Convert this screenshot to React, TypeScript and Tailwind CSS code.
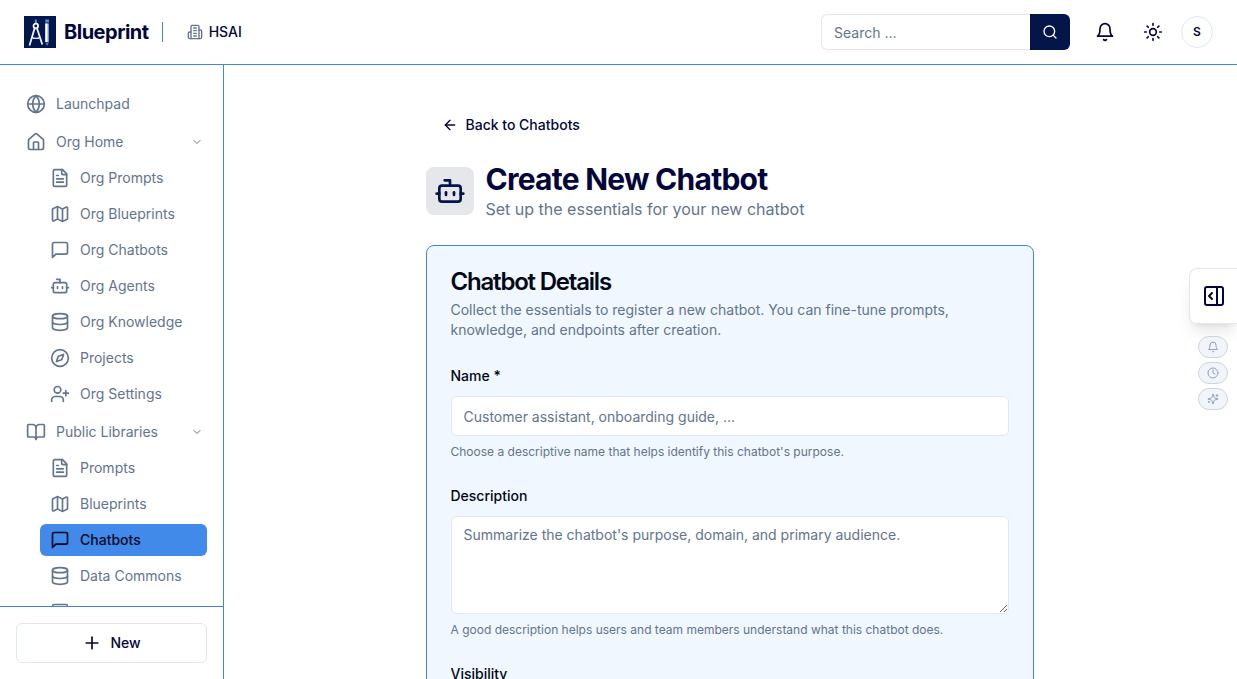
import React from 'react';
import {
  ArrowLeft,
  BookOpen,
  Bot,
  ChevronDown,
  Clock,
  Compass,
  Database,
  Globe,
  House,
  Map,
  PanelRightOpen,
  Plus,
  Search,
  SquareTerminal,
  Sun,
  UserPlus,
} from 'lucide-react';

interface IconProps {
  className?: string;
}

interface NavItem {
  label: string;
  icon: React.ComponentType<IconProps>;
  active?: boolean;
}

interface NavSection {
  label: string;
  icon: React.ComponentType<IconProps>;
  items: NavItem[];
}

// Wrapper for the hand-drawn outline icons
const Outline: React.FC<IconProps & { children: React.ReactNode }> = ({ className, children }) => (
  <svg className={className} viewBox="0 0 24 24" fill="none" stroke="currentColor" strokeWidth="2" strokeLinecap="round" strokeLinejoin="round" aria-hidden="true">
    {children}
  </svg>
);

const BellIcon: React.FC<IconProps> = ({ className }) => (
  <Outline className={className}>
    <path d="M6 8a6 6 0 0 1 12 0c0 7 3 9 3 9H3s3-2 3-9" />
    <path d="M10.3 21a1.94 1.94 0 0 0 3.4 0" />
  </Outline>
);

const MessageIcon: React.FC<IconProps> = ({ className }) => (
  <Outline className={className}>
    <path d="M21 15a2 2 0 0 1-2 2H7l-4 4V5a2 2 0 0 1 2-2h14a2 2 0 0 1 2 2z" />
  </Outline>
);

const FileIcon: React.FC<IconProps> = ({ className }) => (
  <Outline className={className}>
    <path d="M15 2H6a2 2 0 0 0-2 2v16a2 2 0 0 0 2 2h12a2 2 0 0 0 2-2V7Z" />
    <path d="M14 2v4a2 2 0 0 0 2 2h4M10 9H8M16 13H8M16 17H8" />
  </Outline>
);

const BuildingIcon: React.FC<IconProps> = ({ className }) => (
  <Outline className={className}>
    <path d="M6 22V4a2 2 0 0 1 2-2h8a2 2 0 0 1 2 2v18Z" />
    <path d="M6 12H4a2 2 0 0 0-2 2v6a2 2 0 0 0 2 2h2" />
    <path d="M18 9h2a2 2 0 0 1 2 2v9a2 2 0 0 1-2 2h-2" />
    <path d="M10 6h4M10 10h4M10 14h4M10 18h4" />
  </Outline>
);

const SparklesIcon: React.FC<IconProps> = ({ className }) => (
  <Outline className={className}>
    <path d="M9.937 15.5A2 2 0 0 0 8.5 14.063l-6.135-1.582a.5.5 0 0 1 0-.962L8.5 9.936A2 2 0 0 0 9.937 8.5l1.582-6.135a.5.5 0 0 1 .963 0L14.063 8.5A2 2 0 0 0 15.5 9.937l6.135 1.581a.5.5 0 0 1 0 .964L15.5 14.063a2 2 0 0 0-1.437 1.437l-1.582 6.135a.5.5 0 0 1-.963 0z" />
    <path d="M20 3v4M22 5h-4M4 17v2M5 18H3" />
  </Outline>
);

const Logo: React.FC = () => (
  <svg className="h-8 w-8" viewBox="0 0 32 32" fill="none" aria-hidden="true">
    <rect width="32" height="32" fill="#04174a" />
    <path d="M11.8 3.5v4.500" stroke="#4d8fe0" strokeWidth="2" />
    <circle cx="11.800" cy="10" r="2.300" stroke="#fff" strokeWidth="1.700" />
    <path d="M10.700 12 5.500 29.500M12.900 12l5.400 16.500" stroke="#eef2fa" strokeWidth="1.800" />
    <path d="M8 21.500q4 1.800 8 0" stroke="#dfe7f5" strokeWidth="1.400" />
    <path d="M21.300 3.500h3.600v3h-3.600z" fill="#4d8fe0" />
    <path d="M21.300 7.500h3.600v18.500h-3.600z" fill="#7fa5dc" />
    <path d="M21.300 7.500h2.200v18.500h-2.200z" fill="#fff" />
    <path d="M21.300 26.500h3.600L23.100 30z" fill="#3f7fd0" />
  </svg>
);

const sections: NavSection[] = [
  {
    label: 'Org Home',
    icon: House,
    items: [
      { label: 'Org Prompts', icon: FileIcon },
      { label: 'Org Blueprints', icon: Map },
      { label: 'Org Chatbots', icon: MessageIcon },
      { label: 'Org Agents', icon: Bot },
      { label: 'Org Knowledge', icon: Database },
      { label: 'Projects', icon: Compass },
      { label: 'Org Settings', icon: UserPlus },
    ],
  },
  {
    label: 'Public Libraries',
    icon: BookOpen,
    items: [
      { label: 'Prompts', icon: FileIcon },
      { label: 'Blueprints', icon: Map },
      { label: 'Chatbots', icon: MessageIcon, active: true },
      { label: 'Data Commons', icon: Database },
      { label: 'Tools', icon: SquareTerminal },
    ],
  },
];

const quickActions: NavItem[] = [
  { label: 'Notifications', icon: BellIcon },
  { label: 'History', icon: Clock },
  { label: 'Assistant', icon: SparklesIcon },
];

/* ── Top bar ── */
const Header: React.FC = () => (
  <header className="flex h-[65px] shrink-0 items-center justify-between border-b border-[#4486d6] px-6">
    <div className="flex items-center">
      <a href="#" className="flex items-center gap-2 text-xl font-bold tracking-tight">
        <Logo />
        Blueprint
      </a>
      <div className="ml-[13px] h-5 w-px bg-[#4486d6]" />
      <a href="#" className="ml-6 flex items-center gap-1.5 text-sm font-medium">
        <BuildingIcon className="h-4 w-4 text-slate-500" />
        HSAI
      </a>
    </div>

    <div className="flex items-center">
      <form className="flex" onSubmit={(e) => e.preventDefault()}>
        <input
          type="text"
          aria-label="Search"
          placeholder="Search ..."
          className="h-9 w-[209px] rounded-l-md border border-r-0 border-slate-200 px-3 text-sm placeholder:text-slate-500"
        />
        <button type="submit" aria-label="Search" className="flex h-9 w-10 items-center justify-center rounded-r-md bg-[#04154a] text-white">
          <Search className="h-4 w-4" />
        </button>
      </form>
      <button type="button" aria-label="Notifications" className="ml-[15px] flex h-10 w-10 items-center justify-center">
        <BellIcon className="h-5 w-5" />
      </button>
      <button type="button" aria-label="Toggle theme" className="ml-2 flex h-10 w-10 items-center justify-center">
        <Sun className="h-5 w-5" />
      </button>
      <button type="button" aria-label="Account" className="ml-2 flex h-8 w-8 items-center justify-center rounded-full border border-slate-200 text-xs font-semibold">
        S
      </button>
    </div>
  </header>
);

/* ── Sidebar ── */
const Sidebar: React.FC = () => (
  <aside className="flex w-56 shrink-0 flex-col border-r border-[#4486d6] text-sm text-slate-500">
    <nav className="flex min-h-0 flex-1 flex-col gap-0.5 overflow-y-auto px-4 pt-[21px] [scrollbar-width:none]">
      <a href="#" className="flex h-9 shrink-0 items-center gap-2.5 px-2.5">
        <Globe className="h-5 w-5" />
        Launchpad
      </a>
      {sections.map((section) => (
        <div key={section.label}>
          <button type="button" className="flex h-9 w-full items-center gap-2.5 pl-2.5 pr-1">
            <section.icon className="h-5 w-5" />
            <span className="flex-1 text-left">{section.label}</span>
            <ChevronDown className="h-3 w-3" />
          </button>
          <ul className="pl-6">
            {section.items.map((item) => (
              <li key={item.label} className="py-0.5">
                <a
                  href="#"
                  className={
                    item.active
                      ? 'flex h-8 items-center gap-2.5 rounded-md bg-[#418aea] px-2.5 font-medium text-[#020826]'
                      : 'flex h-8 items-center gap-2.5 rounded-md px-2.5'
                  }
                >
                  <item.icon className="h-5 w-5" />
                  {item.label}
                </a>
              </li>
            ))}
          </ul>
        </div>
      ))}
    </nav>
    <div className="border-t border-[#4486d6] p-4">
      <button type="button" className="flex h-10 w-full items-center justify-center gap-2 rounded-md border border-slate-200 font-medium text-[#02063a]">
        <Plus className="h-5 w-5" />
        New
      </button>
    </div>
  </aside>
);

/* ── Form card ── */
const DetailsCard: React.FC = () => (
  <section className="mt-6 rounded-lg border border-[#4486d6] bg-[#f0f7fe] p-6">
    <h2 className="text-2xl leading-none font-semibold tracking-tighter text-[#020817]">Chatbot Details</h2>
    <p className="mt-1.5 text-sm text-slate-500">
      Collect the essentials to register a new chatbot. You can fine-tune prompts, knowledge, and endpoints after creation.
    </p>

    <form className="mt-6 flex flex-col gap-6" onSubmit={(e) => e.preventDefault()}>
      <div className="flex flex-col gap-2">
        <label htmlFor="name" className="text-sm leading-6 font-medium text-[#020817]">
          Name *
        </label>
        <input
          id="name"
          type="text"
          placeholder="Customer assistant, onboarding guide, ..."
          className="h-10 w-full rounded-md border border-slate-200 bg-white px-3 text-sm placeholder:text-slate-500"
        />
        <p className="text-xs text-slate-500">Choose a descriptive name that helps identify this chatbot's purpose.</p>
      </div>

      <div className="flex flex-col gap-2">
        <label htmlFor="description" className="text-sm leading-6 font-medium text-[#020817]">
          Description
        </label>
        <textarea
          id="description"
          placeholder="Summarize the chatbot's purpose, domain, and primary audience."
          className="block h-[98px] w-full resize-y rounded-md border border-slate-200 bg-white px-3 py-2 text-sm placeholder:text-slate-500"
        />
        <p className="text-xs text-slate-500">A good description helps users and team members understand what this chatbot does.</p>
      </div>

      <div className="flex flex-col gap-2">
        <label htmlFor="visibility" className="text-sm leading-6 font-medium text-[#020817]">
          Visibility
        </label>
        <select id="visibility" className="h-10 w-full rounded-md border border-slate-200 bg-white px-3 text-sm">
          <option>Private</option>
          <option>Public</option>
        </select>
      </div>
    </form>
  </section>
);

const App: React.FC = () => {
  return (
    <div className="flex h-screen flex-col overflow-hidden bg-white font-['Inter',sans-serif] text-[#02063a]">
      <Header />
      <div className="flex min-h-0 flex-1">
        <Sidebar />
        <main className="min-w-0 flex-1 overflow-y-auto pr-0.5 [scrollbar-width:none]">
          <div className="mx-auto max-w-2xl px-8 py-10">
            <a href="#" className="inline-flex h-10 items-center gap-2 px-4 text-sm font-medium">
              <ArrowLeft className="h-4 w-4" />
              Back to Chatbots
            </a>
            <div className="mt-4 flex items-center gap-3">
              <div className="flex h-12 w-12 items-center justify-center rounded-lg bg-[#e5e7eb] text-[#04154a]">
                <Bot className="h-8 w-8" />
              </div>
              <div>
                <h1 className="text-3xl font-bold tracking-tight">Create New Chatbot</h1>
                <p className="text-base text-slate-500">Set up the essentials for your new chatbot</p>
              </div>
            </div>
            <DetailsCard />
          </div>
        </main>
      </div>

      {/* Floating panel toggle over the right edge */}
      <div className="fixed top-[268px] right-0 flex flex-col items-end">
        <button type="button" aria-label="Open panel" className="flex h-14 w-12 items-center justify-center rounded-l-lg border border-r-0 border-slate-200 bg-white shadow-lg">
          <PanelRightOpen className="h-6 w-6" />
        </button>
        <div className="mt-3 mr-[9px] flex flex-col gap-1">
          {quickActions.map((action) => (
            <button
              key={action.label}
              type="button"
              aria-label={action.label}
              className="flex h-[22px] w-[30px] items-center justify-center rounded-full border border-slate-300 bg-slate-100 text-slate-400"
            >
              <action.icon className="h-3 w-3" />
            </button>
          ))}
        </div>
      </div>
    </div>
  );
};

export default App;
